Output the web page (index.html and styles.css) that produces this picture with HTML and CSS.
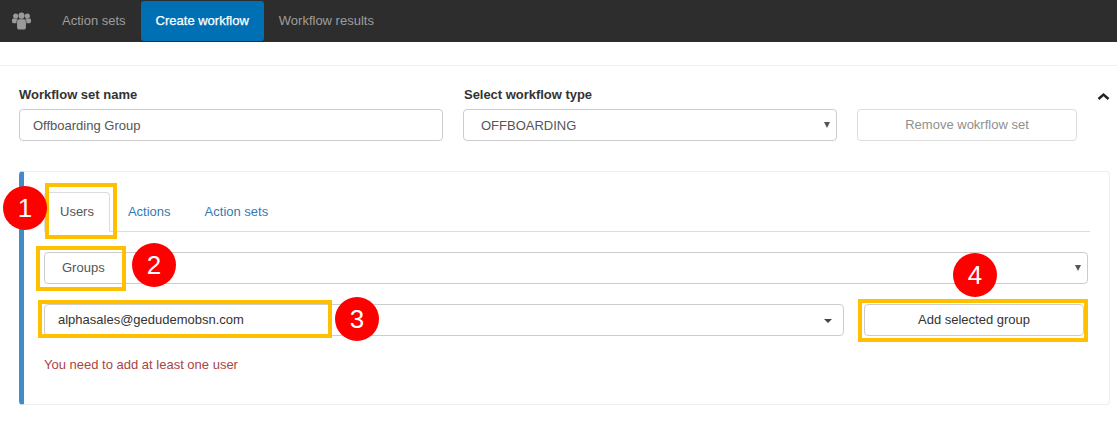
FILE: index.html
```html
<!DOCTYPE html>
<html lang="en">
<head>
<meta charset="utf-8">
<title>Create workflow</title>
<link rel="stylesheet" href="styles.css">
</head>
<body>
<nav class="navbar">
  <svg class="brand" width="19" height="18" viewBox="0 0 21 19" aria-hidden="true">
    <circle cx="4" cy="4" r="2.8"/><circle cx="17" cy="4" r="2.8"/><circle cx="10.5" cy="3.6" r="3.4"/>
    <path d="M0 8.2c0-1 .8-1.6 1.7-1.6h3.6c.5 0 1 .2 1.3.5-1 .8-1.6 2-1.6 3.5v1.4H1.7C.8 12 0 11.3 0 10.4zM21 8.2c0-1-.8-1.6-1.7-1.6h-3.6c-.5 0-1 .2-1.3.5 1 .8 1.6 2 1.6 3.5v1.4h3.3c.9 0 1.7-.7 1.7-1.6z"/>
    <path d="M8 7.6h5c1.4 0 2.4 1 2.4 2.4v6.6c0 1.3-1 2.4-2.4 2.4H8c-1.4 0-2.4-1.1-2.4-2.4V10c0-1.4 1-2.4 2.4-2.4z"/>
  </svg>
  <a class="nav-link">Action sets</a>
  <a class="nav-link nav-active">Create workflow</a>
  <a class="nav-link">Workflow results</a>
</nav>
<main class="page">
  <div class="form-row">
    <div class="field field-name">
      <label class="label">Workflow set name</label>
      <div class="control control-text">Offboarding Group</div>
    </div>
    <div class="field field-type">
      <label class="label label-type">Select workflow type</label>
      <div class="control control-select control-text">OFFBOARDING<span class="arrow"></span></div>
    </div>
    <div class="field field-remove">
      <button class="btn btn-disabled">Remove wokrflow set</button>
    </div>
    <svg class="collapse" width="13" height="9" viewBox="0 0 13 9" aria-hidden="true"><path d="M1.5 7 6.5 2.5 11.5 7" fill="none" stroke="#222" stroke-width="2.4"/></svg>
  </div>
  <section class="panel">
    <div class="tabs">
      <a class="tab tab-active">Users</a>
      <a class="tab">Actions</a>
      <a class="tab">Action sets</a>
    </div>
    <div class="control control-groups control-text"><span class="groups-btn">Groups</span><span class="arrow"></span></div>
    <div class="pick-row">
      <div class="control control-email">alphasales@gedudemobsn.com<span class="caret"></span></div>
      <button class="btn btn-add">Add selected group</button>
    </div>
    <p class="error">You need to add at least one user</p>
  </section>
</main>
<div class="mark mark-1"></div>
<div class="mark mark-2"></div>
<div class="mark mark-3"></div>
<div class="mark mark-4"></div>
<div class="badge badge-1">1</div>
<div class="badge badge-2">2</div>
<div class="badge badge-3">3</div>
<div class="badge badge-4">4</div>
</body>
</html>
```
FILE: styles.css
```css
* { box-sizing: border-box; }
html, body { margin: 0; height: 100%; }
body {
  position: relative;
  overflow: hidden;
  background: #fff;
  color: #333;
  font: 13px/18px "Liberation Sans", Arial, sans-serif;
}
.navbar {
  display: flex;
  align-items: stretch;
  height: 42px;
  padding: 1px 0;
  background: #2d2d2d;
}
.brand { fill: #9a9a9a; margin: 11px 16px 0 12px; flex: none; }
.nav-link {
  display: flex;
  align-items: center;
  padding: 0 15px;
  color: #9d9d9d;
  border-radius: 3px;
}
.nav-active { background: #0070b5; color: #fff; -webkit-text-stroke: .25px #fff; }
.page { padding: 23px 7px 0 19px; position: relative; }
.page::before {
  content: "";
  position: absolute;
  left: 0; right: 0; top: 23px;
  height: 1px;
  background: #eee;
}
.form-row {
  display: flex;
  align-items: flex-end;
  padding-top: 21px;
  position: relative;
  margin-bottom: 30px;
}
.field-name { width: 424px; margin-right: 20px; }
.field-type { width: 374px; margin-right: 20px; }
.field-remove { width: 220px; }
.label { display: block; margin-bottom: 5px; font-weight: 700; line-height: 18px; }
.label-type { padding-left: 1px; letter-spacing: -.03px; }
.control {
  position: relative;
  display: flex;
  align-items: center;
  height: 32px;
  padding: 0 13px;
  background: #fff;
  color: #555;
  border: 1px solid #ccc;
  border-radius: 4px;
}
.control-text { padding-top: 2px; }
.control-select { padding-left: 17px; }
.arrow {
  position: absolute;
  right: 6px;
  top: 12px;
  border-style: solid;
  border-width: 6px 3px 0;
  border-color: #555 transparent transparent;
}
.btn {
  display: block;
  width: 100%;
  height: 32px;
  padding: 0;
  background: #fff;
  border: 1px solid #ccc;
  border-radius: 4px;
  color: #333;
  font: inherit;
}
.btn-disabled { color: #8f8f8f; border-color: #ddd; }
.collapse { position: absolute; right: 0; top: 27px; }
.panel {
  height: 234px;
  padding: 20px 21px 0 20px;
  border: 1px solid #eee;
  border-left: 5px solid #428bca;
  border-radius: 4px;
}
.tabs {
  display: flex;
  height: 40px;
  margin-right: -2px;
  border-bottom: 1px solid #ddd;
}
.tab {
  display: flex;
  align-items: center;
  height: 40px;
  padding: 0 15px;
  margin-right: 2px;
  color: #337ab7;
  border: 1px solid transparent;
  border-radius: 4px 4px 0 0;
}
.tab-active {
  color: #555;
  background: #fff;
  border-color: #ddd #ddd #fff;
}
.control-groups { margin-top: 20px; padding: 0; border-radius: 4px; }
.groups-btn {
  display: flex;
  align-items: center;
  height: 100%;
  padding: 0 17px;
  color: #555;
}
.pick-row { display: flex; gap: 20px; margin: 20px 4px 0 0; }
.control-email { flex: 1; color: #333; }
.caret {
  position: absolute;
  right: 11px;
  top: 14px;
  border: 4px solid transparent;
  border-top-color: #444;
  border-bottom: 0;
}
.btn-add { width: 220px; flex: none; }
.error { margin: 20px 0 0; color: #a94442; }
.mark { position: absolute; border: 4px solid #ffc000; }
.mark-1 { left: 45px; top: 183px; width: 72px; height: 56px; }
.mark-2 { left: 36px; top: 246px; width: 90px; height: 45px; }
.mark-3 { left: 38px; top: 300px; width: 294px; height: 38px; }
.mark-4 { left: 858px; top: 299px; width: 230px; height: 43px; }
.badge {
  position: absolute;
  width: 44px;
  height: 44px;
  border-radius: 50%;
  background: #f00;
  color: #fff;
  font-size: 26px;
  line-height: 44px;
  text-align: center;
}
.badge-1 { left: 3px; top: 186px; }
.badge-2 { left: 132px; top: 243px; }
.badge-3 { left: 335px; top: 297px; }
.badge-4 { left: 953px; top: 253px; }
```
